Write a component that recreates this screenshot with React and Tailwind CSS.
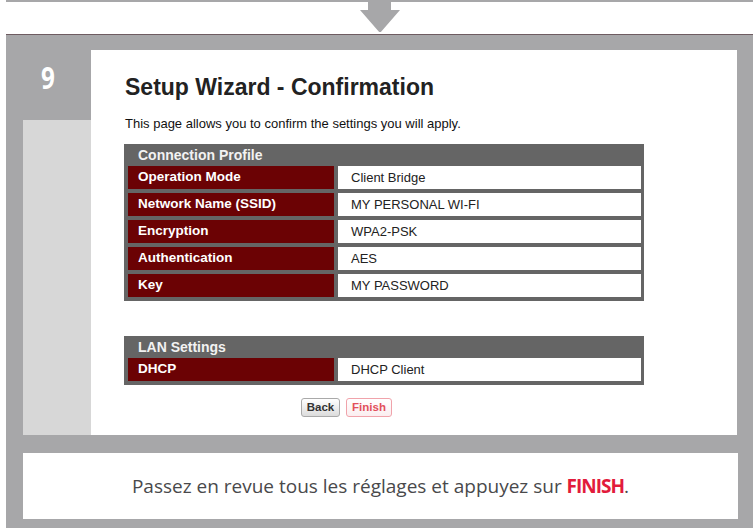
import React from "react";

const rows1 = [
  ["Operation Mode", "Client Bridge"],
  ["Network Name (SSID)", "MY PERSONAL WI-FI"],
  ["Encryption", "WPA2-PSK"],
  ["Authentication", "AES"],
  ["Key", "MY PASSWORD"],
];

function Row({ label, value }) {
  return (
    <div className="flex h-[23px] gap-[4px]">
      <div className="w-[206px] bg-[#6b0204] pl-[10px] flex items-center text-white font-bold text-[13.5px]">
        {label}
      </div>
      <div className="w-[303px] bg-white pl-[13px] flex items-center text-[#222] text-[13px]">
        {value}
      </div>
    </div>
  );
}

function Table({ title, rows, className = "" }) {
  return (
    <div className={"ml-[33px] w-[520px] bg-[#656565] pl-[4px] pr-[3px] pb-[4px] " + className}>
      <div className="h-[22px] flex items-center pl-[10px] font-bold text-[14px] text-[#f2f2f2]">
        {title}
      </div>
      <div className="flex flex-col gap-[4px]">
        {rows.map(([l, v]) => (
          <Row key={l} label={l} value={v} />
        ))}
      </div>
    </div>
  );
}

export default function App() {
  return (
    <div className="w-[753px] h-[528px] bg-white flex flex-col overflow-hidden">
      {/* top connector */}
      <div className="h-[34px] ml-[6px] border-t-2 border-[#a7a7a9] flex">
        <svg width="40" height="32" viewBox="0 0 40 32" className="ml-[354px] -mt-[2px]">
          <path d="M8 0 H31 V10 H40 L20 33 L0 10 H8 Z" fill="#a7a7a9" />
        </svg>
      </div>

      {/* panel */}
      <div className="ml-[6px] w-[747px] h-[494px] bg-[#a7a7a9] border-t border-[#6e5c61] flex flex-col">
        <div className="flex h-[400px]">
          {/* left column */}
          <div className="w-[85px] flex flex-col">
            <div className="h-[85px] flex items-center justify-center pr-[2px]">
              <span
                className="text-white font-bold text-[31px] leading-none scale-x-[0.78] inline-block"
                style={{ fontFamily: '"Open Sans", sans-serif' }}
              >
                9
              </span>
            </div>
            <div className="flex-1 pl-[17px] flex">
              <div className="flex-1 bg-[#d7d7d7]" />
            </div>
          </div>

          {/* screenshot */}
          <div
            className="mt-[15px] w-[646px] h-[385px] bg-white flex flex-col"
            style={{ fontFamily: '"Liberation Sans", Arial, sans-serif' }}
          >
            <div className="mt-[26px] ml-[34px] h-[23px] leading-[23px] text-[23px] font-bold text-[#222]">
              Setup Wizard - Confirmation
            </div>
            <div className="mt-[17px] ml-[34px] h-[15px] leading-[15px] text-[13px] text-[#111]">
              This page allows you to confirm the settings you will apply.
            </div>
            <Table title="Connection Profile" rows={rows1} className="mt-[13px]" />
            <Table title="LAN Settings" rows={[["DHCP", "DHCP Client"]]} className="mt-[35px]" />
            <div className="mt-[13px] ml-[210px] flex gap-[6px]">
              <div className="h-[19px] w-[39px] rounded-[3px] border border-[#a9a9a9] bg-gradient-to-b from-white to-[#dcdcdc] flex items-center justify-center text-[11.5px] font-bold text-[#333]">
                Back
              </div>
              <div className="h-[19px] w-[46px] rounded-[3px] border border-[#f0a3ab] bg-gradient-to-b from-white to-[#fbeef0] flex items-center justify-center text-[11.5px] font-bold text-[#e2505c]">
                Finish
              </div>
            </div>
          </div>
        </div>

        {/* bottom caption */}
        <div
          className="mt-[18px] ml-[17px] w-[715px] h-[66px] bg-white flex items-center justify-center text-[19px] text-[#49494b]"
          style={{ fontFamily: '"Open Sans", sans-serif' }}
        >
          <span>
            Passez en revue tous les réglages et appuyez sur{" "}
            <span className="font-bold text-[#e21b3c] tracking-[-1px]">FINISH</span>.
          </span>
        </div>
      </div>
    </div>
  );
}
